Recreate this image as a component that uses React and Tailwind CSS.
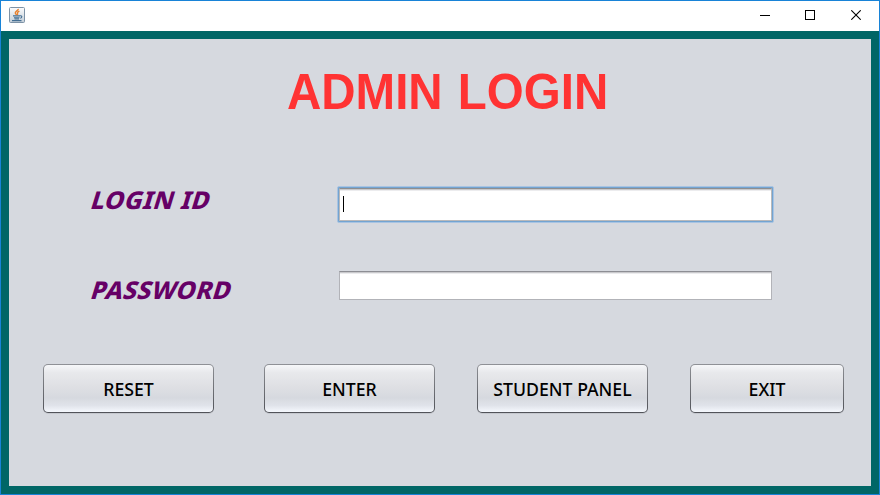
function JavaIcon() {
  return (
    <svg width="16" height="16" viewBox="0 0 16 16">
      <defs>
        <linearGradient id="tile" x1="0" y1="0" x2="0" y2="1">
          <stop offset="0" stopColor="#fbfcfd" />
          <stop offset="1" stopColor="#c3ced8" />
        </linearGradient>
      </defs>
      <rect x="0.5" y="0.5" width="15" height="15" rx="1" fill="url(#tile)" stroke="#7d92a6" />
      <path d="M9.3 1.8C9.6 3.6 6 4.2 6.3 6c.1.8.9 1.2 1.2 2M10.4 4.2C9 4.8 8 5.5 8.5 6.3c.3.5.3 1-.3 1.6" fill="none" stroke="#e8812d" strokeWidth="1.4" />
      <path d="M4 8.9h7M5 10.7h5.5M5.5 12h4.5M3 13.6h9.5M11 8.8c2.4-.5 2.4 1.9.2 2.5" fill="none" stroke="#446f93" strokeWidth="1.1" />
    </svg>
  );
}

function TitleBar() {
  return (
    <header className="flex h-[30px] shrink-0 items-center justify-between bg-white pr-[18px] pb-[2px] pl-2">
      <JavaIcon />
      <div className="flex items-center">
        <svg className="mr-[35px]" width="10" height="10" shapeRendering="crispEdges">
          <path d="M0 5.5h10" stroke="#000" />
        </svg>
        <svg className="mr-9" width="10" height="10" shapeRendering="crispEdges">
          <rect x="0.5" y="0.5" width="9" height="9" fill="none" stroke="#000" />
        </svg>
        <svg width="10" height="10" viewBox="0 0 10 10">
          <path d="M.3.3l9.4 9.4M9.7.3L.3 9.7" stroke="#000" strokeWidth="1.1" />
        </svg>
      </div>
    </header>
  );
}

function Label({ children }) {
  return (
    <span className="block w-max -skew-x-[17deg] font-['Noto_Sans'] text-[24.5px] leading-[30px] font-extrabold tracking-[0.4px] whitespace-nowrap text-[#660066]">
      {children}
    </span>
  );
}

function Button({ children, className }) {
  return (
    <button
      className={`h-[49px] shrink-0 rounded-[5px] bg-linear-to-b from-[#8f9196] to-[#515359] p-px shadow-[0_1px_0_#c5c8ce] ${className}`}
    >
      <span className="flex h-full items-center justify-center rounded-[4px] bg-[linear-gradient(to_bottom,#f6f7f9_0%,#e8e9ec_16%,#dfe0e4_45%,#d6d9df_70%,#e0e3ea_86%,#f5f8fd_100%)] pt-[2px] font-['Noto_Sans'] text-[17.7px] leading-none font-medium whitespace-nowrap text-black">
        {children}
      </span>
    </button>
  );
}

export default function App() {
  return (
    <div className="flex h-[495px] w-[880px] flex-col overflow-hidden border border-[#1883d7] bg-white">
      <TitleBar />
      <main className="flex flex-1 flex-col border-8 border-[#006666] bg-[#d6d9df]">
        <h1 className="mt-[25px] ml-[278px] h-14 w-max origin-left scale-x-[0.95] font-['Liberation_Sans'] text-[50px] leading-[56px] font-bold [word-spacing:2px] whitespace-nowrap text-[#ff3333]">
          ADMIN LOGIN
        </h1>
        <div className="mt-[66px] flex h-[37px] items-start pl-[83px]">
          <div className="-mt-px w-[245px]">
            <Label>LOGIN ID</Label>
          </div>
          <div className="flex h-[37px] w-[437px] rounded-[2px] border border-[#a9c4e2] bg-[#73a4d1] p-px">
            <div className="flex flex-1 items-start border border-[#b9b9bb] border-t-[#8d8e91] bg-white pt-[7px] pl-[3px] shadow-[inset_0_1px_0_#c9c9cb,inset_0_2px_0_#ececee]">
              <span className="h-4 w-px bg-black" />
            </div>
          </div>
        </div>
        <div className="mt-[48px] flex h-[30px] items-start pl-[83px]">
          <div className="w-[247px] pt-[4px]">
            <Label>PASSWORD</Label>
          </div>
          <div className="h-[29px] w-[433px] border border-[#b2b3b8] border-t-[#8d8e94] bg-white shadow-[inset_0_1px_0_#c9c9cc,inset_0_2px_0_#ececee]" />
        </div>
        <div className="mt-[63px] flex pl-[34px]">
          <Button className="mr-[50px] w-[171px]">RESET</Button>
          <Button className="mr-[42px] w-[171px]">ENTER</Button>
          <Button className="mr-[42px] w-[171px]">STUDENT PANEL</Button>
          <Button className="w-[154px]">EXIT</Button>
        </div>
      </main>
    </div>
  );
}
